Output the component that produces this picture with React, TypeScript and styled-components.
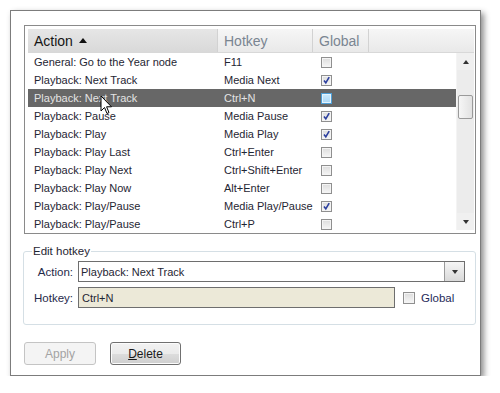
import React from "react";
import styled, { createGlobalStyle } from "styled-components";

const Global = createGlobalStyle`
  html, body { margin: 0; padding: 0; background: #ffffff; }
  body { font-family: "Liberation Sans", Arial, sans-serif; font-size: 11px; color: #1f2633; }
`;

const Win = styled.div`
  position: relative;
  margin: 10px 0 0 10px;
  width: 456px;
  height: 350px;
  border: 1px solid #7c7c7c;
  background: #ffffff;
  box-shadow: 3px 3px 6px rgba(0, 0, 0, 0.45);
  padding: 14px 0 0 13px;
  box-sizing: content-box;
  display: flex;
  flex-direction: column;
`;

const ListFrame = styled.div`
  width: 446px;
  height: 203px;
  border: 1px solid #8a8a8a;
  padding: 3px 1px 1px 3px;
  display: flex;
  flex-direction: column;
  overflow: hidden;
`;

const Header = styled.div`
  display: flex;
  height: 24px;
  flex: none;
  background: linear-gradient(#f6f6f6, #e9e9e9);
  border-bottom: 1px solid #d8d8d8;
  box-sizing: border-box;
`;

const HeadCell = styled.div<{ $w?: number; $sorted?: boolean }>`
  ${(p) => (p.$w ? `width: ${p.$w}px; flex: none;` : "flex: 1;")}
  box-sizing: border-box;
  border-right: ${(p) => (p.$w ? "1px solid #d2d2d2" : "none")};
  background: ${(p) => (p.$sorted ? "linear-gradient(#e6e6e6, #d9d9d9)" : "transparent")};
  color: ${(p) => (p.$sorted ? "#151515" : "#7a8591")};
  font-family: "Liberation Sans", Arial, sans-serif;
  font-size: 14px;
  padding-left: 6px;
  display: flex;
  align-items: center;
  gap: 6px;
`;

const SortArrow = styled.span`
  width: 0;
  height: 0;
  border-left: 4px solid transparent;
  border-right: 4px solid transparent;
  border-bottom: 5px solid #111;
  margin-top: -1px;
`;

const Body = styled.div`
  flex: 1;
  display: flex;
  overflow: hidden;
`;

const Rows = styled.div`
  flex: 1;
  overflow: hidden;
`;

const Row = styled.div<{ $sel?: boolean }>`
  display: flex;
  height: 18px;
  align-items: center;
  background: ${(p) => (p.$sel ? "#676767" : "transparent")};
  color: ${(p) => (p.$sel ? "#e4e4e4" : "#1f2633")};
  font-size: 11px;
`;

const Cell = styled.div<{ $w: number; $pad: number }>`
  width: ${(p) => p.$w}px;
  flex: none;
  box-sizing: border-box;
  padding-left: ${(p) => p.$pad}px;
  white-space: nowrap;
  overflow: hidden;
`;

const Check = styled.span<{ $on?: boolean; $hot?: boolean }>`
  display: inline-block;
  width: 11px;
  height: 11px;
  box-sizing: border-box;
  border: 1px solid ${(p) => (p.$hot ? "#4f9fd6" : "#8f8f8f")};
  background: ${(p) =>
    p.$hot ? "linear-gradient(#cdeafc, #a9d6f5)" : "linear-gradient(#dcdcdc, #f6f6f6)"};
  position: relative;
  vertical-align: middle;
  box-shadow: inset 0 0 0 1px ${(p) => (p.$hot ? "#e4f3fd" : "#f4f4f4")};
`;

const CheckMark = () => (
  <svg width="9" height="9" viewBox="0 0 9 9" style={{ position: "absolute", left: 0, top: 0 }}>
    <path d="M2 4.5 L3.8 6.8 L7.2 1.2" fill="none" stroke="#2c3f9e" strokeWidth="1.6" />
  </svg>
);

const ScrollBar = styled.div`
  width: 17px;
  flex: none;
  background: #ececec;
  border-left: 1px solid #f4f4f4;
  display: flex;
  flex-direction: column;
  margin-bottom: 2px;
`;

const ScrollBtn = styled.div`
  height: 17px;
  flex: none;
  display: flex;
  align-items: center;
  justify-content: center;
  background: #f0f0f0;
`;

const Tri = styled.span<{ $down?: boolean }>`
  width: 0;
  height: 0;
  border-left: 3px solid transparent;
  border-right: 3px solid transparent;
  ${(p) => (p.$down ? "border-top: 4px solid #333;" : "border-bottom: 4px solid #333;")}
`;

const Track = styled.div`
  flex: 1;
  padding: 25px 1px 0 1px;
`;

const Thumb = styled.div`
  height: 24px;
  border: 1px solid #9a9a9a;
  border-radius: 2px;
  background: linear-gradient(90deg, #f6f6f6, #e2e2e2);
  box-sizing: border-box;
`;

const Group = styled.fieldset`
  margin: 11px 0 0 -1px;
  width: 453px;
  height: 80px;
  box-sizing: border-box;
  border: 1px solid #d5dfe5;
  border-radius: 3px;
  padding: 4px 10px 0 9px;
  display: flex;
  flex-direction: column;
  gap: 5px;
`;

const Legend = styled.legend`
  padding: 0 1px;
  margin-left: -1px;
  font-size: 11.5px;
  color: #1f2633;
`;

const FormRow = styled.div`
  display: flex;
  align-items: center;
  height: 21px;
`;

const Label = styled.div`
  width: 40px;
  text-align: right;
  margin-right: 5px;
  font-size: 11.5px;
  color: #1f2a4a;
`;

const Combo = styled.div`
  width: 387px;
  height: 21px;
  box-sizing: border-box;
  border: 1px solid #6e6e6e;
  display: flex;
  align-items: center;
  background: #fff;
`;

const ComboText = styled.div`
  flex: 1;
  padding-left: 2px;
  font-size: 11px;
`;

const DropBtn = styled.div`
  width: 20px;
  height: 19px;
  box-sizing: border-box;
  border-left: 1px solid #9a9a9a;
  background: linear-gradient(#f5f5f5, #d9d9d9);
  display: flex;
  align-items: center;
  justify-content: center;
`;

const HotInput = styled.div`
  width: 317px;
  height: 21px;
  box-sizing: border-box;
  border: 1px solid #6e6e6e;
  background: #ece9d8;
  padding-left: 3px;
  display: flex;
  align-items: center;
  font-size: 11px;
`;

const GlobalLabel = styled.label`
  display: flex;
  align-items: center;
  gap: 6px;
  margin-left: 8px;
  font-size: 11.5px;
  color: #1f2a5a;
`;

const BigCheck = styled(Check)`
  width: 12px;
  height: 12px;
`;

const Buttons = styled.div`
  display: flex;
  gap: 14px;
  margin: 17px 0 0 0;
`;

const Btn = styled.div<{ $disabled?: boolean; $w: number }>`
  width: ${(p) => p.$w}px;
  height: 23px;
  box-sizing: border-box;
  border: 1px solid ${(p) => (p.$disabled ? "#c4c4c4" : "#707070")};
  border-radius: 3px;
  background: ${(p) =>
    p.$disabled ? "#f4f4f4" : "linear-gradient(#f2f2f2 0%, #ebebeb 50%, #dddddd 51%, #cfcfcf 100%)"};
  color: ${(p) => (p.$disabled ? "#a3a3a3" : "#1a1a1a")};
  display: flex;
  align-items: center;
  justify-content: center;
  font-size: 12px;
  box-shadow: inset 0 0 0 1px ${(p) => (p.$disabled ? "transparent" : "#fcfcfc")};
`;

const Cursor = styled.svg`
  position: absolute;
  left: 89px;
  top: 84px;
`;

const rows = [
  { a: "General: Go to the Year node", h: "F11", g: false },
  { a: "Playback: Next Track", h: "Media Next", g: true },
  { a: "Playback: Next Track", h: "Ctrl+N", g: false, sel: true },
  { a: "Playback: Pause", h: "Media Pause", g: true },
  { a: "Playback: Play", h: "Media Play", g: true },
  { a: "Playback: Play Last", h: "Ctrl+Enter", g: false },
  { a: "Playback: Play Next", h: "Ctrl+Shift+Enter", g: false },
  { a: "Playback: Play Now", h: "Alt+Enter", g: false },
  { a: "Playback: Play/Pause", h: "Media Play/Pause", g: true },
  { a: "Playback: Play/Pause", h: "Ctrl+P", g: false },
];

export default function App() {
  return (
    <>
      <Global />
      <Win>
        <ListFrame>
          <Header>
            <HeadCell $w={190} $sorted>
              Action <SortArrow />
            </HeadCell>
            <HeadCell $w={95}>Hotkey</HeadCell>
            <HeadCell $w={56}>Global</HeadCell>
            <HeadCell />
          </Header>
          <Body>
            <Rows>
              {rows.map((r, i) => (
                <Row key={i} $sel={r.sel}>
                  <Cell $w={190} $pad={6}>{r.a}</Cell>
                  <Cell $w={95} $pad={6}>{r.h}</Cell>
                  <Cell $w={56} $pad={8}>
                    <Check $on={r.g} $hot={r.sel}>{r.g && <CheckMark />}</Check>
                  </Cell>
                </Row>
              ))}
            </Rows>
            <ScrollBar>
              <ScrollBtn><Tri /></ScrollBtn>
              <Track><Thumb /></Track>
              <ScrollBtn><Tri $down /></ScrollBtn>
            </ScrollBar>
          </Body>
        </ListFrame>
        <Group>
          <Legend>Edit hotkey</Legend>
          <FormRow>
            <Label>Action:</Label>
            <Combo>
              <ComboText>Playback: Next Track</ComboText>
              <DropBtn><Tri $down /></DropBtn>
            </Combo>
          </FormRow>
          <FormRow>
            <Label>Hotkey:</Label>
            <HotInput>Ctrl+N</HotInput>
            <GlobalLabel>
              <BigCheck />
              Global
            </GlobalLabel>
          </FormRow>
        </Group>
        <Buttons>
          <Btn $w={72} $disabled>Apply</Btn>
          <Btn $w={71}><span><u>D</u>elete</span></Btn>
        </Buttons>
        <Cursor width="13" height="20" viewBox="0 0 13 20">
          <path d="M1 1 L1 16 L4.5 12.5 L7 18.5 L9 17.6 L6.6 11.8 L11.5 11.8 Z" fill="#fff" stroke="#000" strokeWidth="1" strokeLinejoin="round" />
        </Cursor>
      </Win>
    </>
  );
}
